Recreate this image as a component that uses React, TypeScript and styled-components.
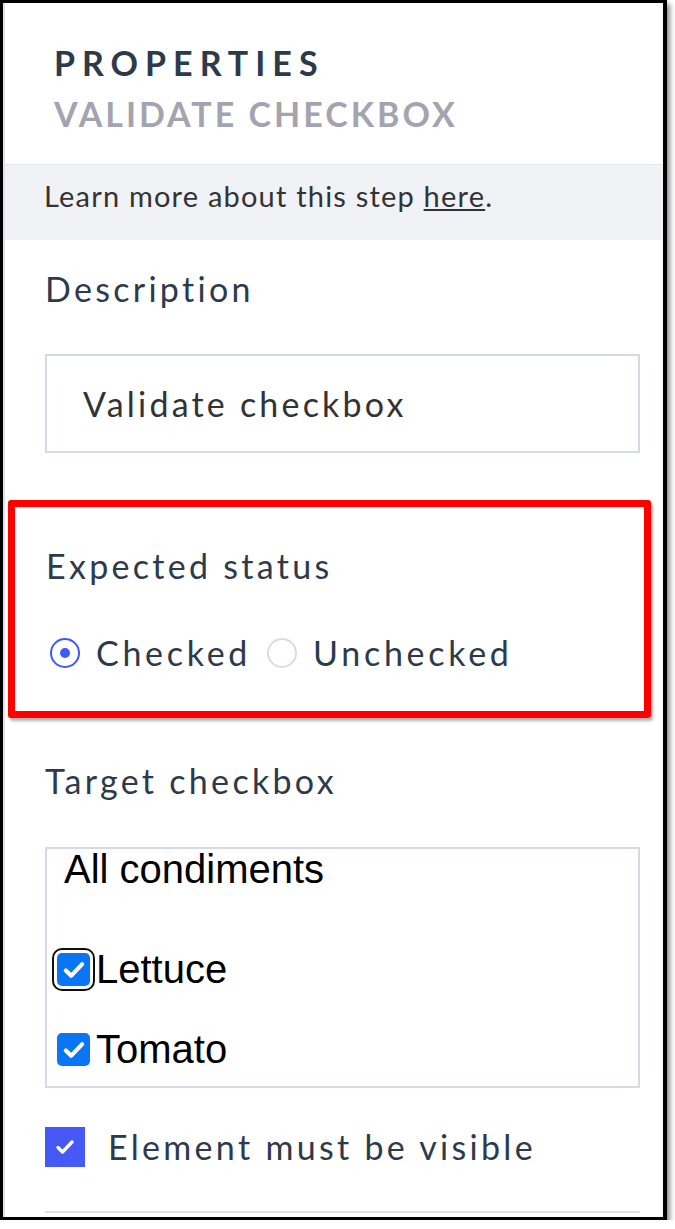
import styled, { createGlobalStyle } from "styled-components";

const GlobalStyle = createGlobalStyle`
  html, body {
    margin: 0;
    padding: 0;
    background: #ffffff;
  }
  body {
    font-family: Lato, "Noto Sans", sans-serif;
  }
`;

const Frame = styled.div`
  box-sizing: border-box;
  width: 667px;
  height: 1220px;
  border-style: solid;
  border-color: #000;
  border-width: 3px 4px 3px 3px;
  box-shadow: 3px 4px 5px rgba(0, 0, 0, 0.45);
  overflow: hidden;
  background: #fff;
`;

const Panel = styled.div`
  height: 100%;
  border-left: 2px solid #dde2ea;
  display: flex;
  flex-direction: column;
`;

const Header = styled.div`
  padding: 40px 20px 30px 49px;
  display: flex;
  flex-direction: column;
  gap: 11px;
`;

const Title = styled.div<{ $muted?: boolean }>`
  font-size: 34px;
  line-height: 40px;
  font-weight: 700;
  letter-spacing: ${(p) => (p.$muted ? "3px" : "7px")};
  color: ${(p) => (p.$muted ? "#a4a4b1" : "#2d3a4c")};
`;

const InfoBand = styled.div`
  border-top: 1px solid #e2e5ec;
  background: #f1f2f6;
  padding: 11px 20px 24px 39px;
  font-size: 29px;
  line-height: 40px;
  letter-spacing: 1.2px;
  color: #333333;

  a {
    color: inherit;
    text-decoration: underline;
  }
`;

const Section = styled.div<{ $top: number }>`
  padding: 0 23px 0 40px;
  margin-top: ${(p) => p.$top}px;
  display: flex;
  flex-direction: column;
`;

const Highlight = styled.div`
  margin: 47px 12px 0 3px;
  border: 7px solid #ff0000;
  border-radius: 3px;
  box-shadow: 2px 3px 3px rgba(0, 0, 0, 0.3);
  padding: 39px 20px 38px 31px;
  display: flex;
  flex-direction: column;
  gap: 47px;
`;

const Label = styled.div`
  font-size: 34px;
  line-height: 40px;
  letter-spacing: 3.3px;
  color: #2d3a4c;
`;

const TextInput = styled.input`
  box-sizing: border-box;
  margin-top: 45px;
  width: 100%;
  height: 99px;
  border: 2px solid #d6dae6;
  border-radius: 0;
  padding: 0 20px 0 36px;
  font-family: Lato, "Noto Sans", sans-serif;
  font-size: 34px;
  letter-spacing: 3.2px;
  color: #333333;
  background: #fff;
  outline: none;
`;

const RadioRow = styled.div`
  display: flex;
  align-items: center;
  padding-left: 4px;
`;

const RadioOption = styled.label`
  display: flex;
  align-items: center;
  gap: 16px;
  margin-right: 16px;
  font-size: 34px;
  line-height: 40px;
  letter-spacing: 3.7px;
  color: #2d3a4c;
`;

const RadioCircle = styled.span<{ $on?: boolean }>`
  box-sizing: border-box;
  width: 30px;
  height: 30px;
  border-radius: 50%;
  border: 2px solid ${(p) => (p.$on ? "#3d5af6" : "#d9dbe6")};
  display: flex;
  align-items: center;
  justify-content: center;

  &::after {
    content: "";
    width: 10px;
    height: 10px;
    border-radius: 50%;
    background: ${(p) => (p.$on ? "#3d5af6" : "transparent")};
  }
`;

const FrameBox = styled.div`
  box-sizing: border-box;
  margin-top: 46px;
  height: 241px;
  border: 2px solid #d6dae6;
  padding: 0 0 0 10px;
  font-family: "Liberation Sans", Arial, sans-serif;
  color: #000;
  overflow: hidden;
`;

const GroupTitle = styled.div`
  font-size: 40px;
  line-height: 45px;
  margin: -2px 0 0 7px;
`;

const Option = styled.div<{ $top: number }>`
  display: flex;
  align-items: center;
  gap: 6px;
  margin-top: ${(p) => p.$top}px;
  font-size: 40px;
  line-height: 45px;
`;

const NativeBox = styled.span<{ $focus?: boolean }>`
  width: 33px;
  height: 33px;
  border-radius: 5px;
  background: #0a75f5;
  display: flex;
  align-items: center;
  justify-content: center;
  outline: ${(p) => (p.$focus ? "2px solid #101010" : "none")};
  outline-offset: 3px;
`;

const VisibleRow = styled.div`
  margin-top: 39px;
  display: flex;
  align-items: center;
  gap: 23px;
`;

const SquareCheck = styled.span`
  width: 40px;
  height: 40px;
  background: #4658f6;
  display: flex;
  align-items: center;
  justify-content: center;
`;

const Divider = styled.div`
  margin-top: 44px;
  height: 2px;
  background: #dde0e9;
`;

const Tick = ({ size, stroke }: { size: number; stroke: number }) => (
  <svg width={size} height={size} viewBox="0 0 24 24" fill="none">
    <path
      d="M5 12.5l4.5 4.5L19 7"
      stroke="#ffffff"
      strokeWidth={stroke}
      strokeLinecap="round"
      strokeLinejoin="round"
    />
  </svg>
);

const App = () => {
  return (
    <>
      <GlobalStyle />
      <Frame>
        <Panel>
          <Header>
            <Title>PROPERTIES</Title>
            <Title $muted>VALIDATE CHECKBOX</Title>
          </Header>

          <InfoBand>
            Learn more about this step <a href="#">here</a>.
          </InfoBand>

          <Section $top={29}>
            <Label>Description</Label>
            <TextInput readOnly defaultValue="Validate checkbox" />
          </Section>

          <Highlight>
            <Label>Expected status</Label>
            <RadioRow>
              <RadioOption>
                <RadioCircle $on />
                Checked
              </RadioOption>
              <RadioOption>
                <RadioCircle />
                Unchecked
              </RadioOption>
            </RadioRow>
          </Highlight>

          <Section $top={43}>
            <Label>Target checkbox</Label>
            <FrameBox>
              <GroupTitle>All condiments</GroupTitle>
              <Option $top={55}>
                <NativeBox $focus>
                  <Tick size={28} stroke={3.6} />
                </NativeBox>
                Lettuce
              </Option>
              <Option $top={35}>
                <NativeBox>
                  <Tick size={28} stroke={3.6} />
                </NativeBox>
                Tomato
              </Option>
            </FrameBox>
            <VisibleRow>
              <SquareCheck>
                <Tick size={24} stroke={3.4} />
              </SquareCheck>
              <Label>Element must be visible</Label>
            </VisibleRow>
            <Divider />
          </Section>
        </Panel>
      </Frame>
    </>
  );
};

export default App;
